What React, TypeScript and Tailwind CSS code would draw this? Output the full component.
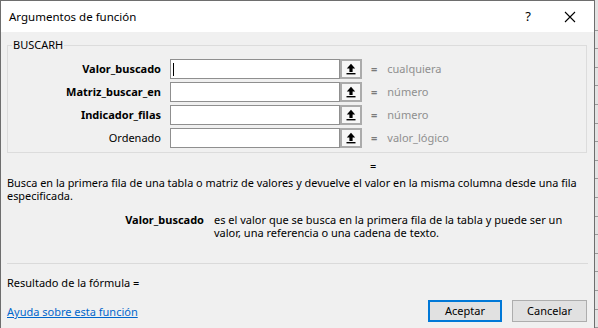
import React from "react";

const font = { fontFamily: '"Noto Sans", "Liberation Sans", sans-serif' };

function RefIcon() {
  return (
    <svg width="10" height="12" viewBox="0 0 10 12">
      <path d="M5 0.8 L0.8 5.6 L3.4 5.6 L3.4 9 L6.6 9 L6.6 5.6 L9.2 5.6 Z" fill="#000" />
      <rect x="0.5" y="10" width="9" height="1.4" fill="#000" />
    </svg>
  );
}

function Row({ label, bold, value, cursor }: { label: string; bold: boolean; value: string; cursor?: boolean }) {
  return (
    <div className="flex h-[20px] items-center">
      <div className={`w-[153px] text-right text-[11px] leading-[20px] text-black ${bold ? "font-bold" : ""}`}>{label}</div>
      <div className="ml-[9px] flex h-[20px] w-[170px] items-center border border-[#8f8f8f] bg-white">
        {cursor && <div className="ml-[2px] h-[13px] w-px bg-black" />}
      </div>
      <div className="flex h-[20px] w-[22px] items-center justify-center border-2 border-[#ababab] bg-[#f7f7f7]">
        <RefIcon />
      </div>
      <div className="ml-[9px] text-[11px] font-bold text-[#7a7a7a]">=</div>
      <div className="ml-[10px] text-[11px] text-[#8f8f8f]">{value}</div>
    </div>
  );
}

export default function App() {
  return (
    <div className="flex h-[328px] w-[598px] overflow-hidden bg-[#f0f0f0]" style={font}>
      <div className="flex w-[595px] flex-col border-l border-r border-t border-[#6e6e6e] bg-[#f0f0f0]">
        {/* title bar */}
        <div className="flex h-[31px] items-center bg-white">
          <div className="ml-[8px] flex-1 text-[11.5px] text-black">Argumentos de función</div>
          <div className="w-[20px] text-center text-[13px] text-black">?</div>
          <div className="ml-[22px] mr-[14px] flex w-[20px] items-center justify-center">
            <svg width="12" height="12" viewBox="0 0 12 12">
              <path d="M1 1 L11 11 M11 1 L1 11" stroke="#000" strokeWidth="1.1" />
            </svg>
          </div>
        </div>
        {/* body */}
        <div className="flex flex-1 flex-col pl-[6px] pr-[6px]">
          <div className="relative mt-[13px] h-[108px] w-[580px] border border-[#dcdcdc]">
            <div className="absolute -top-[8px] left-[4px] bg-[#f0f0f0] px-[1px] text-[11px] leading-[14px] text-black">BUSCARH</div>
            <div className="mt-[13px] flex flex-col gap-[3px]">
              <Row label="Valor_buscado" bold value="cualquiera" cursor />
              <Row label="Matriz_buscar_en" bold value="número" />
              <Row label="Indicador_filas" bold value="número" />
              <Row label="Ordenado" bold={false} value="valor_lógico" />
            </div>
          </div>
          <div className="mt-[6px] h-[13px] pl-[363px] text-[11px] leading-[13px] text-black">=</div>
          <div className="mt-[4px] text-[10.9px] leading-[13px] text-black">
            Busca en la primera fila de una tabla o matriz de valores y devuelve el valor en la misma columna desde una fila especificada.
          </div>
          <div className="mt-[11px] flex text-[11px] leading-[13px] text-black">
            <div className="w-[207px] pr-[10px] text-right font-bold">Valor_buscado</div>
            <div className="w-[350px]">es el valor que se busca en la primera fila de la tabla y puede ser un valor, una referencia o una cadena de texto.</div>
          </div>
          <div className="mt-[24px] h-px w-[581px] bg-[#dadada]" />
          <div className="mt-[12px] text-[11px] leading-[13px] text-black">Resultado de la fórmula =</div>
          <div className="mt-[11px] flex items-start">
            <div className="mt-[5px] flex-1 text-[11px] leading-[13px] text-[#0066cc] underline">Ayuda sobre esta función</div>
            <button className="h-[22px] w-[74px] border-2 border-[#0078d7] bg-[#e1e1e1] text-[11px] text-black">Aceptar</button>
            <button className="ml-[10px] mr-[1px] h-[22px] w-[75px] border border-[#adadad] bg-[#e1e1e1] text-[11px] text-black">Cancelar</button>
          </div>
        </div>
      </div>
      <div className="flex flex-1 flex-col bg-[#e3e3e3]">
        {Array.from({ length: 17 }).map((_, i) => (
          <div key={i} className={`border-b border-[#9a9a9a] ${i === 0 ? "h-[33px]" : "h-[20px]"}`} />
        ))}
      </div>
    </div>
  );
}
